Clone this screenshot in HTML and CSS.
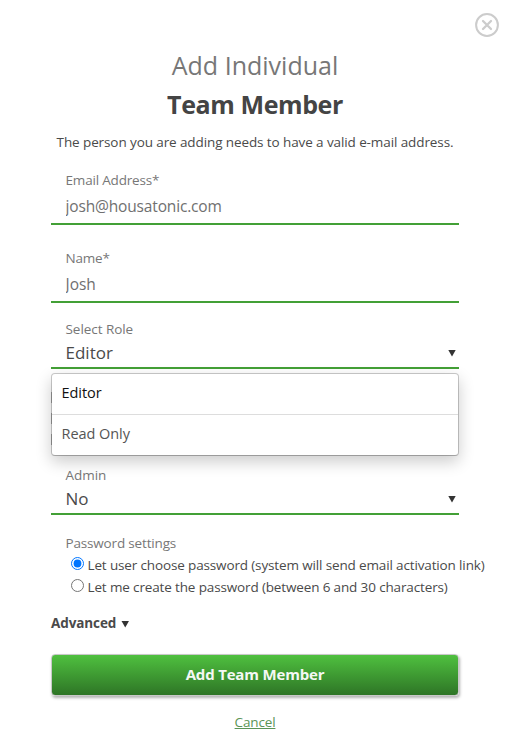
FILE: index.html
```html
<!DOCTYPE html>
<html lang="en">
<head>
  <meta charset="UTF-8" />
  <meta name="viewport" content="width=device-width, initial-scale=1.0"/>
  <title>Add Individual Team Member</title>
  <link rel="stylesheet" href="styles.css">
</head>
<body>
  <div class="dialog">
    <button type="button" class="close" aria-label="Close">
      <svg width="24" height="24" viewBox="0 0 24 24" fill="none" stroke="#ccc">
        <circle cx="12" cy="12" r="10.9" stroke-width="2"/>
        <path d="M8 8l8 8M16 8l-8 8" stroke-width="2.3" stroke-linecap="round"/>
      </svg>
    </button>

    <h1><span class="light">Add Individual</span><span class="strong">Team Member</span></h1>
    <p class="intro">The person you are adding needs to have a valid e-mail address.</p>

    <form id="memberForm">
      <div class="field">
        <label for="email">Email Address*</label>
        <input type="text" class="email" id="email" name="email" value="josh@housatonic.com">
      </div>

      <div class="field name">
        <label for="name">Name*</label>
        <input type="text" id="name" name="name" value="Josh">
      </div>

      <div class="field select role">
        <label>Select Role</label>
        <div class="value"><span>Editor</span><i class="arrow"></i></div>
        <ul class="menu">
          <li class="selected">Editor</li>
          <li>Read Only</li>
        </ul>
      </div>

      <!-- permission boxes, mostly covered while the role menu is open -->
      <div class="permissions">
        <i class="box"></i>
        <i class="box"></i>
        <i class="box"></i>
      </div>

      <div class="field select">
        <label>Admin</label>
        <div class="value"><span>No</span><i class="arrow"></i></div>
      </div>

      <div class="password">
        <p class="legend">Password settings</p>
        <label class="option"><input type="radio" name="password" checked><span>Let user choose password (system will send email activation link)</span></label>
        <label class="option"><input type="radio" name="password"><span>Let me create the password (between 6 and 30 characters)</span></label>
      </div>

      <div class="advanced"><span>Advanced</span><i class="arrow"></i></div>

      <button type="submit" class="submit">Add Team Member</button>
      <a class="cancel" href="#">Cancel</a>
    </form>
  </div>
</body>
</html>
```

FILE: styles.css
```css
* {
  margin: 0;
  padding: 0;
  box-sizing: border-box;
}

body {
  font-family: 'Open Sans', 'Noto Sans', sans-serif;
  font-size: 13.5px;
  background: #fff;
  color: #4a4a4a;
}

.dialog {
  position: relative;
  width: 510px;
  height: 743px;
  padding: 46px 51px 0;
  overflow: hidden;
}

.close {
  position: absolute;
  top: 13px;
  right: 11px;
  width: 24px;
  height: 24px;
  border: none;
  background: none;
  cursor: pointer;
}

.close svg {
  display: block;
}

h1 {
  font-size: 25px;
  line-height: 39px;
  text-align: center;
}

h1 span {
  display: block;
}

h1 .light {
  font-weight: 400;
  color: #777;
}

h1 .strong {
  font-weight: 700;
  letter-spacing: -0.4px;
  color: #444;
}

.intro {
  margin-top: 8px;
  line-height: 20px;
  letter-spacing: -0.1px;
  text-align: center;
  white-space: nowrap;
}

.field {
  position: relative;
  height: 53px;
  margin-top: 20px;
  border-bottom: 2px solid #43a036;
}

.field label {
  display: block;
  padding-left: 14.5px;
  line-height: 16px;
  letter-spacing: -0.18px;
  color: #777;
}

.field input {
  display: block;
  width: 100%;
  height: 22px;
  margin-top: 7px;
  padding-left: 14.5px;
  border: none;
  outline: none;
  background: none;
  font-family: inherit;
  font-size: 15.5px;
  color: #707070;
}

.field .email {
  letter-spacing: -0.16px;
}

.field.name {
  margin-top: 25px;
}

.field.select {
  height: 48px;
  margin-top: 18px;
}

.field.select label {
  letter-spacing: -0.05px;
}

.value {
  display: flex;
  align-items: center;
  justify-content: space-between;
  height: 26px;
  margin-top: 2px;
  padding: 0 3px 0 14.5px;
  font-size: 17px;
}

.arrow {
  width: 8px;
  height: 7px;
  background: #333;
  clip-path: polygon(0 0, 100% 0, 50% 100%);
}

.value .arrow {
  margin-top: 2px;
}

.menu {
  position: absolute;
  top: 52px;
  left: 0;
  z-index: 2;
  width: 408px;
  height: 83px;
  list-style: none;
  background: #fff;
  background-clip: padding-box;
  border: 1px solid rgba(0, 0, 0, 0.2);
  border-bottom-color: rgba(0, 0, 0, 0.28);
  border-radius: 4px;
  box-shadow: 0 6px 16px rgba(0, 0, 0, 0.2);
}

.menu li {
  height: 41px;
  padding-left: 9.5px;
  font-size: 14.5px;
  line-height: 38px;
  letter-spacing: -0.05px;
  color: #555;
}

.menu .selected {
  border-bottom: 1px solid #ddd;
  color: #111;
}

.permissions {
  display: flex;
  flex-direction: column;
  gap: 10px;
  height: 80px;
  padding-top: 23px;
}

.box {
  width: 11px;
  height: 11px;
  border: 1px solid #b5b5b5;
}

.password {
  padding-left: 14px;
  margin-top: 18px;
}

.legend {
  padding-left: 0.5px;
  line-height: 20px;
  letter-spacing: -0.17px;
  color: #777;
}

.option {
  display: flex;
  align-items: center;
  height: 22px;
  letter-spacing: -0.14px;
  white-space: nowrap;
}

.legend + .option {
  margin-top: 1px;
}

.option input {
  width: 13px;
  height: 13px;
  margin: 0 3.5px 3px 6px;
}

.advanced {
  display: flex;
  align-items: center;
  gap: 5px;
  height: 20px;
  margin-top: 15px;
  font-weight: 700;
  letter-spacing: -0.1px;
}

.advanced .arrow {
  margin-top: 2px;
}

.submit {
  display: block;
  width: 408px;
  height: 42px;
  margin-top: 21px;
  padding-bottom: 2px;
  border: 1px solid #c8c8c8;
  border-radius: 4px;
  background: linear-gradient(#4fc03f, #2e7526);
  box-shadow: 1px 2px 3px rgba(0, 0, 0, 0.3);
  font-family: inherit;
  font-size: 15px;
  font-weight: 700;
  letter-spacing: -0.18px;
  color: #f4f8f4;
  cursor: pointer;
}

.cancel {
  display: block;
  width: max-content;
  margin: 16px auto 0;
  line-height: 20px;
  letter-spacing: -0.15px;
  color: #5a9456;
}
```
